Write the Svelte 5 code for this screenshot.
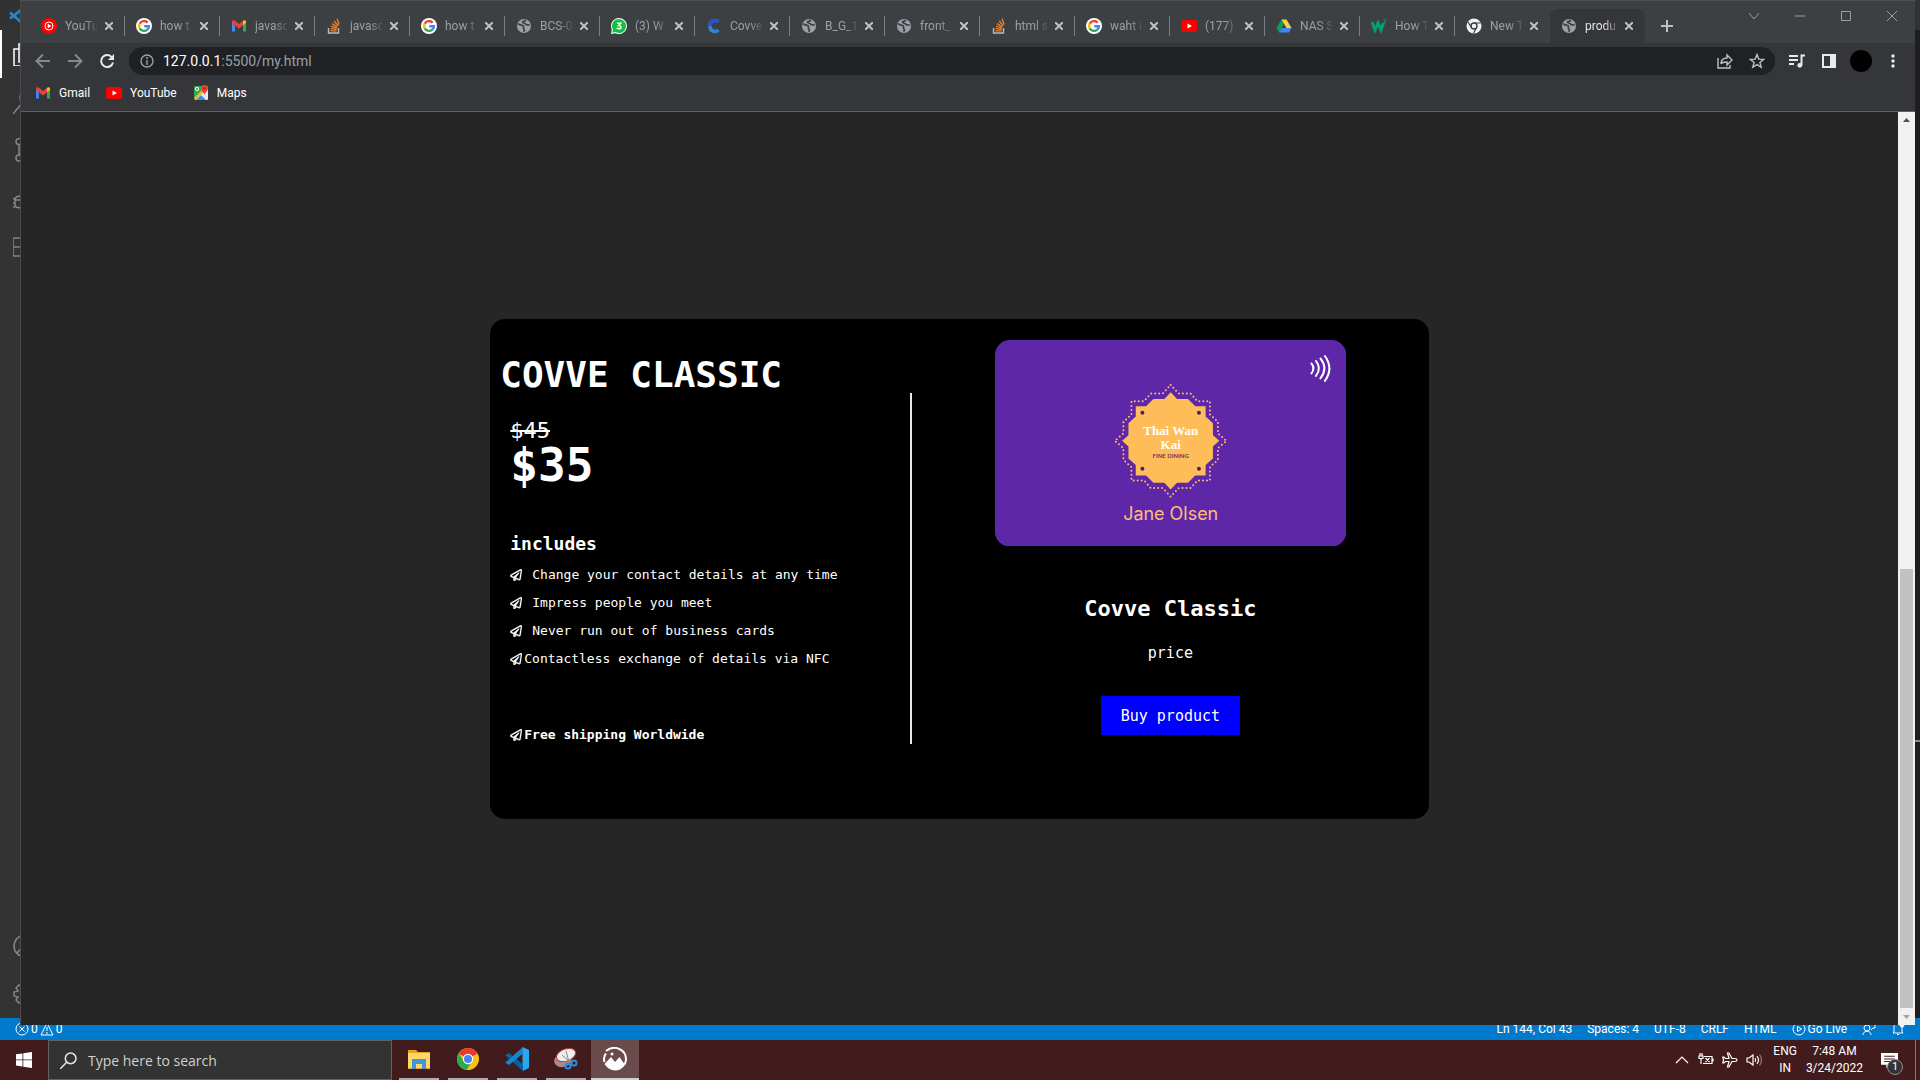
<script>
  const tabs = [
    { icon: 'ytmusic', title: 'YouTu' },
    { icon: 'google', title: 'how t' },
    { icon: 'gmail', title: 'javasc' },
    { icon: 'stack', title: 'javasc' },
    { icon: 'google', title: 'how t' },
    { icon: 'globe', title: 'BCS-0' },
    { icon: 'whatsapp', title: '(3) W' },
    { icon: 'covve', title: 'Covve' },
    { icon: 'globe', title: 'B_G_1' },
    { icon: 'globe', title: 'front_' },
    { icon: 'stack', title: 'html s' },
    { icon: 'google', title: 'waht i' },
    { icon: 'youtube', title: '(177) I' },
    { icon: 'drive', title: 'NAS S' },
    { icon: 'w3', title: 'How T' },
    { icon: 'chromemono', title: 'New T' },
    { icon: 'globe', title: 'produ', active: true }
  ];
  const bookmarks = [
    { icon: 'gmail', title: 'Gmail' },
    { icon: 'youtube', title: 'YouTube' },
    { icon: 'maps', title: 'Maps' }
  ];
  const features = [
    { text: 'Change your contact details at any time', spaced: true },
    { text: 'Impress people you meet', spaced: true },
    { text: 'Never run out of business cards', spaced: true },
    { text: 'Contactless exchange of details via NFC', spaced: false }
  ];
  const activity = ['files', 'search', 'scm', 'debug', 'blocks'];
  const statusRight = ['Ln 144, Col 43', 'Spaces: 4', 'UTF-8', 'CRLF', 'HTML'];
  const pinned = [
    { icon: 'explorer', label: 'File Explorer' },
    { icon: 'chrome', label: 'Google Chrome' },
    { icon: 'vscode', label: 'Visual Studio Code' },
    { icon: 'snip', label: 'Snipping Tool' },
    { icon: 'photos', label: 'Image viewer', active: true }
  ];

  // One quadrant of the badge, mirrored into the other three
  function ring(quadrant) {
    const back = quadrant.slice(0, -1).reverse();
    const right = [...quadrant, ...back.map(([x, y]) => [x, -y])];
    const left = right.slice(1, -1).reverse().map(([x, y]) => [-x, y]);
    return [...right, ...left].map((p) => p.join(',')).join(' ');
  }
  const badge = ring([[0, -146], [19, -126], [52, -126], [74, -104], [105, -104], [105, -73], [127, -53], [127, -17], [146, 0]]);
  const dots = ring([[0, -168], [24, -142], [60, -142], [80, -119], [118, -119], [118, -79], [142, -57], [142, -22], [168, 0]]);
</script>

{#snippet plane()}
  <svg class="plane" viewBox="0 0 512 512" aria-hidden="true">
    <path fill="currentColor" stroke="currentColor" stroke-width="12" d="M440 6.500L24 246.400c-34.400 19.900-31.100 70.800 5.700 85.900L144 379.600V464c0 46.400 59.200 65.500 86.600 28.600l43.800-59.100 111.900 46.200c5.900 2.400 12.100 3.600 18.300 3.600 8.200 0 16.300-2.100 23.600-6.200 12.800-7.200 21.600-20 23.900-34.500l59.400-387.200c6.100-40.100-36.900-68.800-71.500-48.900zM192 464v-64.600l36.600 15.100L192 464zm212.600-28.700l-153.800-63.500L391 169.500c10.700-15.500-9.500-33.500-23.700-21.200L155.800 332.600 48 288 464 48l-59.400 387.300z" />
  </svg>
{/snippet}

{#snippet icon(name)}
  <svg class="ico" viewBox="0 0 16 16" aria-hidden="true">
    {#if name === 'ytmusic'}
      <circle cx="8" cy="8" r="8" fill="#f00" /><circle cx="8" cy="8" r="4" fill="none" stroke="#fff" /><path d="M6.700 5.700v4.600L10.500 8z" fill="#fff" />
    {:else if name === 'google'}
      <circle cx="8" cy="8" r="8" fill="#fff" />
      <g fill="none" stroke-width="2.400">
        <path d="M11.600 4.600A4.900 4.900 0 0 0 3.700 5.700" stroke="#ea4335" />
        <path d="M3.700 5.700a4.900 4.900 0 0 0 0 4.700" stroke="#fbbc05" />
        <path d="M3.700 10.400a4.900 4.900 0 0 0 7.600 1.200" stroke="#34a853" />
        <path d="M11.300 11.600A4.900 4.900 0 0 0 12.900 8.200H8.200" stroke="#4285f4" />
      </g>
    {:else if name === 'gmail'}
      <path d="M1 4v9.500h3V7.400z" fill="#4285f4" /><path d="M15 4v9.500h-3V7.400z" fill="#34a853" /><path d="M1 3.500C1 2 3 1.800 4 2.700L8 6l4-3.300v4.500L8 10.400 1 5z" fill="#ea4335" /><path d="M12 2.700c1-.9 3-.7 3 .8V5l-3 2.400z" fill="#fbbc05" />
    {:else if name === 'stack'}
      <path d="M2.500 10v5h10v-5" fill="none" stroke="#bcbbbb" stroke-width="1.400" />
      <path d="M4.500 12.800h6M4.600 10.600l6 .8M5 8.200l5.800 1.900M6.200 5.600l5.100 3.300M8.200 3l4.100 4.700M11 .8l2.200 5.600" stroke="#f48024" stroke-width="1.300" />
    {:else if name === 'globe'}
      <circle cx="8" cy="8" r="7" fill="#9aa0a6" />
      <path d="M2.200 5.500c1.300 2.300 4.300 1 5.300 2.800.5 1.500-1 2 .5 2.700.8.500.2 1.800-.5 2.800M9.800 2C9 3.600 7 3 6.500 4c0 1.300 2 .7 2.600 1.600.6 1.500 2.400 1.400 4.700 1.400" fill="none" stroke="#3c4043" stroke-width="1.700" />
    {:else if name === 'whatsapp'}
      <path d="M8 0a8 8 0 1 1-3.500 15.200L0 16l.8-4.500A8 8 0 0 1 8 0z" fill="#fff" /><path d="M8 1a7 7 0 1 1-3.400 13.100l-3.300.7.600-3.300A7 7 0 0 1 8 1z" fill="#12c143" />
      <path d="M6 5.200h3.700L7.700 7.500c3 0 2.700 3.300.2 3.300-1 0-1.600-.4-2.100-.9" fill="none" stroke="#fff" stroke-width="1.500" />
    {:else if name === 'covve'}
      <path d="M12.500 4C10 1.500 4 2 4 8s6 6.500 8.500 4" fill="none" stroke="#2f86d8" stroke-width="3.600" /><path d="M12.500 4C10 1.500 4 2 4 8" fill="none" stroke="#2a50cf" stroke-width="3.600" />
    {:else if name === 'youtube'}
      <rect y="2" width="16" height="12" rx="3" fill="#f00" /><path d="M6.500 5.500v5L11 8z" fill="#fff" />
    {:else if name === 'drive'}
      <path d="M5.500 1.500L.5 10l2.600 4.400L8 5.800z" fill="#0f9d58" /><path d="M5.500 1.500h5l5 8.500h-5.100z" fill="#ffcd40" /><path d="M5.700 10h9.800l-2.600 4.400H3.100z" fill="#4285f4" />
    {:else if name === 'w3'}
      <path d="M1 4l3 8L7 5l3 7L12.500 5" fill="none" stroke="#04a070" stroke-width="3" /><path d="M12.500 2h2l-1 1.500q1.800 1.500-.7 1.900" fill="none" stroke="#04a070" />
    {:else if name === 'chromemono'}
      <circle cx="8" cy="8" r="7.500" fill="#f1f3f4" /><circle cx="8" cy="8" r="3" fill="none" stroke="#3c4043" stroke-width="1.400" /><path d="M8 5h6.500M5.400 9.500L2 4M10.600 9.500L7.500 15.300" stroke="#3c4043" stroke-width="1.200" />
    {:else if name === 'maps'}
      <rect x="1" y="1" width="14" height="14" rx="1" fill="#34a853" /><path d="M2 15L14 3l1 1v10l-1 1z" fill="#e8eaed" /><path d="M3 15l5-5 5 5z" fill="#4285f4" /><path d="M1 13L13 1l1.500 1.500L2.500 14.500z" fill="#fbbc05" /><circle cx="4" cy="4" r="1.600" fill="none" stroke="#fff" /><path d="M11.500 0a3.500 3.500 0 0 1 3.500 3.500c0 2.500-3 3.500-3.500 7-.5-3.500-3.500-4.500-3.500-7A3.500 3.500 0 0 1 11.500 0z" fill="#ea4335" /><circle cx="11.500" cy="3.500" r="1.200" fill="#a52714" />
    {/if}
  </svg>
{/snippet}

<div class="desktop">
  <div class="editor">
    <header class="editor-title">
      <svg viewBox="0 0 16 16" aria-hidden="true"><path d="M1 4.500l15 13M1 10.500L16 -1" stroke="#2489ca" stroke-width="2.600" /></svg>
    </header>
    <div class="editor-body">
      <nav class="activity" aria-label="Views">
        {#each activity as name, i}
          <button class:current={i === 0} aria-label={name}>
            <svg viewBox="0 0 24 24" aria-hidden="true">
              {#if name === 'files'}<path d="M6 7H1v17h13v-4M6 2h10l5 5v13H6z" />
              {:else if name === 'search'}<circle cx="15" cy="8" r="8" /><path d="M9 13L0 24" />
              {:else if name === 'scm'}<circle cx="6" cy="3.500" r="3" /><circle cx="6" cy="20" r="3" /><circle cx="18" cy="8" r="3" /><path d="M6 6.500V17M18 11c0 4-10 2-11.500 6" />
              {:else if name === 'debug'}<path d="M8 0v8M8 1l15 9-10 6M2 14c0-5 8-5 8 0v4c0 5-8 5-8 0zM0 12l2 2M0 17h2M0 22l2-2M2 14h8" />
              {:else}<path d="M0 4h10v9h10v9H0zM0 13h10v9M14 1h8v8h-8z" />{/if}
            </svg>
          </button>
        {/each}
        <span class="grow"></span>
        <button aria-label="Accounts"><svg viewBox="0 0 24 24" aria-hidden="true"><circle cx="12" cy="12" r="11" /><circle cx="12" cy="9" r="4.500" /><path d="M4 20c2-7 14-7 16 0" /></svg></button>
        <button aria-label="Manage"><svg viewBox="0 0 24 24" aria-hidden="true"><path d="M10 1h4l1 4 3-2 3 3-2 3 4 1v4l-4 1 2 3-3 3-3-2-1 4h-4l-1-4-3 2-3-3 2-3-4-1v-4l4-1-2-3 3-3 3 2z" /><circle cx="12" cy="12" r="3" /></svg></button>
      </nav>
      <div class="editor-pane"><span class="mark"></span></div>
    </div>
    <footer class="status">
      <button>
        <svg viewBox="0 0 14 14" aria-hidden="true"><circle cx="7" cy="7" r="6" /><path d="M4.500 4.500l5 5M9.500 4.500l-5 5" /></svg>
        0
        <svg viewBox="0 0 14 14" aria-hidden="true"><path d="M7 1l6 12H1zM7 5v4M7 10v2" /></svg>
        0
      </button>
      <span class="grow"></span>
      {#each statusRight as text}<span>{text}</span>{/each}
      <button><svg viewBox="0 0 14 14" aria-hidden="true"><circle cx="7" cy="7" r="6" /><path d="M5.500 4.500v5L9.500 7z" /></svg>Go Live</button>
      <button aria-label="Feedback"><svg viewBox="0 0 14 14" aria-hidden="true"><circle cx="5" cy="6" r="3" /><path d="M1 13c0-5 8-5 8 0M7 1h6v5h-2L9 8" /></svg></button>
      <button aria-label="Notifications"><svg viewBox="0 0 14 14" aria-hidden="true"><path d="M3 10V5c0-5 8-5 8 0v5l1 1H2zM6 12.500h2" /><circle cx="11" cy="3" r="2" fill="#fff" /></svg></button>
    </footer>
  </div>

  <section class="browser" aria-label="Browser window">
    <div class="strip">
      <div class="tabs">
        {#each tabs as tab}
          <div class="tab" class:active={tab.active}>
            {@render icon(tab.icon)}
            <span class="tab-title">{tab.title}</span>
            <button class="close" aria-label="Close tab"><svg viewBox="0 0 8 8" aria-hidden="true"><path d="M0 0l8 8M8 0L0 8" /></svg></button>
          </div>
        {/each}
        <button class="new-tab" aria-label="New tab"><svg viewBox="0 0 12 12" aria-hidden="true"><path d="M6 0v12M0 6h12" /></svg></button>
      </div>
      <div class="controls">
        <button aria-label="Search tabs"><svg viewBox="0 0 10 10" aria-hidden="true"><path d="M0 2l5 6 5-6" /></svg></button>
        <button aria-label="Minimize"><svg viewBox="0 0 10 10" aria-hidden="true"><path d="M0 5h10" /></svg></button>
        <button aria-label="Maximize"><svg viewBox="0 0 10 10" aria-hidden="true"><path d="M.5.5h9v9h-9z" /></svg></button>
        <button aria-label="Close"><svg viewBox="0 0 10 10" aria-hidden="true"><path d="M0 0l10 10M10 0L0 10" /></svg></button>
      </div>
    </div>

    <div class="toolbar">
      <button class="tool dim" aria-label="Back"><svg viewBox="0 0 16 16" aria-hidden="true"><path d="M15 8H2M8 1.500L1.500 8 8 14.500" /></svg></button>
      <button class="tool dim" aria-label="Forward"><svg viewBox="0 0 16 16" aria-hidden="true"><path d="M1 8h13M8 1.500L14.500 8 8 14.500" /></svg></button>
      <button class="tool" aria-label="Reload"><svg viewBox="0 0 16 16" aria-hidden="true"><path d="M13 4.500A6 6 0 1 0 14 9.500" /><path d="M15 1v6H9z" fill="currentColor" stroke="none" /></svg></button>
      <div class="omnibox">
        <svg class="info" viewBox="0 0 14 14" aria-hidden="true"><circle cx="7" cy="7" r="6" /><path d="M7 6v5M7 3v2" /></svg>
        <a class="url" href="#top"><b>127.0.0.1</b>:5500/my.html</a>
        <button class="tool soft" aria-label="Share"><svg viewBox="0 0 16 16" aria-hidden="true"><path d="M1 5v10h12v-3M4 11c0-5 3-6 6-6V2l5 5-5 5V9c-3 0-5 0-6 2z" /></svg></button>
        <button class="tool soft" aria-label="Bookmark"><svg viewBox="0 0 16 16" aria-hidden="true"><path d="M8 1.500l1.800 4.600 4.900.3-3.800 3.100 1.300 4.800L8 11.600l-4.200 2.700 1.300-4.800L1.300 6.400l4.900-.3z" /></svg></button>
      </div>
      <button class="tool" aria-label="Media"><svg viewBox="0 0 16 16" aria-hidden="true"><path d="M0 3h9M0 7h9M0 11h5M12.500 12V2.500H16" /><circle cx="10.800" cy="12.300" r="2.400" fill="currentColor" stroke="none" /></svg></button>
      <button class="tool" aria-label="Side panel"><svg viewBox="0 0 16 16" aria-hidden="true"><path d="M2 2h12v12H2z" /><path d="M9 2h5v12H9z" fill="currentColor" stroke="none" /></svg></button>
      <button class="tool" aria-label="Profile"><span class="avatar"></span></button>
      <button class="tool" aria-label="Menu"><svg viewBox="0 0 16 16" aria-hidden="true"><g fill="currentColor" stroke="none"><circle cx="8" cy="3" r="1.700" /><circle cx="8" cy="8" r="1.700" /><circle cx="8" cy="13" r="1.700" /></g></svg></button>
    </div>

    <nav class="bookmarks" aria-label="Bookmarks">
      {#each bookmarks as mark}
        <a href="#top">{@render icon(mark.icon)}{mark.title}</a>
      {/each}
    </nav>

    <div class="viewport">
      <main class="page">
        <article class="product">
          <div class="details">
            <h1>COVVE CLASSIC</h1>
            <div class="indent">
              <del>$45</del>
              <strong class="price">$35</strong>
              <h2>includes</h2>
              <ul>
                {#each features as feature}
                  <li class:spaced={feature.spaced}>{@render plane()}{feature.text}</li>
                {/each}
              </ul>
              <p class="shipping">{@render plane()}<b>Free shipping Worldwide</b></p>
            </div>
          </div>
          <div class="divider"></div>
          <div class="offer">
            <svg class="card" viewBox="0 0 352 207" role="img" aria-label="Covve business card">
              <rect width="352" height="207" rx="15" fill="#5e27a7" />
              <g fill="none" stroke="#fff" stroke-width="2" stroke-linecap="round">
                <path d="M317 23.500q4 5 0 10" /><path d="M321.500 21q6 7.500 0 15" /><path d="M326 18.500q8 10 0 20" /><path d="M330.500 16q9 12.500 0 25" />
              </g>
              <g transform="translate(176 101) scale(.3333)">
                <polygon points={badge} fill="#ffbd59" />
                <polygon points={dots} fill="none" stroke="#ffbd78" stroke-width="6" stroke-linecap="round" stroke-dasharray="0 12" />
                <g fill="#4a2260"><circle cx="-85" cy="-84" r="6" /><circle cx="85" cy="-84" r="6" /><circle cx="-85" cy="84" r="6" /><circle cx="85" cy="84" r="6" /></g>
              </g>
              <text class="brand" x="176" y="95">Thai Wan</text>
              <text class="brand" x="176" y="109">Kai</text>
              <text class="tag" x="176" y="118">FINE DINING</text>
              <text class="owner" x="176" y="180">Jane Olsen</text>
            </svg>
            <h2 class="name">Covve Classic</h2>
            <p class="label">price</p>
            <button class="buy">Buy product</button>
          </div>
        </article>
      </main>
      <div class="scrollbar" aria-hidden="true">
        <svg viewBox="0 0 17 17"><path d="M5 10l3.500-4 3.500 4z" fill="#505050" /></svg>
        <div class="track"><div class="thumb"></div></div>
        <svg viewBox="0 0 17 17"><path d="M5 7l3.500 4L12 7z" fill="#a3a3a3" /></svg>
      </div>
    </div>
  </section>

  <footer class="taskbar">
    <button class="start" aria-label="Start"><svg viewBox="0 0 16 16" aria-hidden="true"><path d="M0 2.300l6.500-.9v6.100H0zM7.300 1.300L16 0v7.500H7.300zM0 8.300h6.500v6.200L0 13.600zM7.300 8.300H16V16l-8.700-1.300z" fill="#fff" /></svg></button>
    <label class="search">
      <svg viewBox="0 0 16 16" aria-hidden="true"><circle cx="10" cy="6" r="5" /><path d="M6.500 9.500L0 16" /></svg>
      <input type="text" placeholder="Type here to search" aria-label="Search" />
    </label>
    <div class="pins">
      {#each pinned as app}
        <button class:open={app.active} aria-label={app.label}>
          <svg viewBox="0 0 24 24" aria-hidden="true">
            {#if app.icon === 'explorer'}
              <path d="M1 3h8l2 2h12v17H1z" fill="#e8a317" /><path d="M1 6h22v15H1z" fill="#ffd869" /><path d="M5 12h14v10h-4v-5H9v5H5z" fill="#3f97d8" />
            {:else if app.icon === 'chrome'}
              <circle cx="12" cy="12" r="11" fill="#fbc116" /><path d="M12 12L2.500 6.500a11 11 0 0 1 19 0z" fill="#e33b2e" /><path d="M2.500 6.500a11 11 0 0 0 8.300 16.400L16 14l-8 0z" fill="#2da94f" /><path d="M12 12h9.500a11 11 0 0 1-10.700 11L16 14z" fill="#fbc116" /><circle cx="12" cy="12" r="5.200" fill="#fff" /><circle cx="12" cy="12" r="4" fill="#4285f4" />
            {:else if app.icon === 'vscode'}
              <path d="M17.500 0L24 3v18l-6.500 3z" fill="#29a8f2" /><path d="M2 7l2-1 14 11.500V24L.5 8.500z" fill="#0065a9" /><path d="M.5 15.500L18 0v6.500L4 18l-2-1z" fill="#1587d0" />
            {:else if app.icon === 'snip'}
              <ellipse cx="9" cy="13" rx="9" ry="7" fill="#a98a8b" transform="rotate(-20 9 13)" /><ellipse cx="12" cy="8" rx="10" ry="6" fill="#eee" stroke="#b33b3b" transform="rotate(-20 12 8)" /><path d="M8 8l8 7M12 4l3 11" stroke="#8a8a8a" /><g fill="none" stroke="#2d8de0" stroke-width="2"><circle cx="14" cy="19" r="2.500" /><circle cx="20" cy="16" r="2.500" /></g>
            {:else}
              <path d="M3 4C12-3 23 3 23 12q0 3-1.500 5.500" fill="none" stroke="#fff" stroke-width="2" /><path d="M3 6.500Q0 10 1.500 15" fill="none" stroke="#fff" stroke-width="2" /><path d="M1.500 17L8 10l4 5 4.500-5 5.500 8q-4 5.500-10 5.500T1.500 17z" fill="#fff" /><circle cx="9" cy="7" r="1.500" fill="#fff" />
            {/if}
          </svg>
        </button>
      {/each}
    </div>
    <span class="grow"></span>
    <div class="tray">
      <button aria-label="Hidden icons"><svg viewBox="0 0 16 16" aria-hidden="true"><path d="M2 11l6-6 6 6" /></svg></button>
      <button aria-label="Battery"><svg viewBox="0 0 16 16" aria-hidden="true"><path d="M6 4.500h8v7H5M15 6.500v3M2 1v3M4 1v3M1 4h4v2.500H1zM3 7v5M7.500 6l4 4M11.500 6l-4 4" /></svg></button>
      <button aria-label="Airplane mode"><svg viewBox="0 0 16 16" aria-hidden="true"><path d="M15 8q0-1.500-2-1.500h-3L7 1H5.500L7 6.500H3.500L2 5H.8l.7 3-.7 3H2l1.500-1.500H7L5.500 15H7l3-5.500h3q2 0 2-1.500z" /></svg></button>
      <button aria-label="Volume"><svg viewBox="0 0 16 16" aria-hidden="true"><path d="M1 6v4h2l4 3V3L3 6zM9 6q1.500 2 0 4M11 4q3 4 0 8" /><path d="M13.500 2.500q4 5.500 0 11" opacity=".4" /></svg></button>
    </div>
    <button class="clock lang">ENG<br />IN</button>
    <button class="clock">7:48 AM<br />3/24/2022</button>
    <button class="notes" aria-label="Notifications">
      <svg viewBox="0 0 16 16" aria-hidden="true"><path d="M0 1h16v11H8l-3 3v-3H0z" fill="#fff" /><path d="M3 4h10M3 6.500h10M3 9h6" stroke="#451c1f" /></svg>
      <span class="count">1</span>
    </button>
    <span class="peek"></span>
  </footer>
</div>

<style>
  :global(body) { margin: 0; background: #1e1e1e; }
  * { box-sizing: border-box; }
  button { margin: 0; padding: 0; border: 0; background: none; color: inherit; font: inherit; display: flex; align-items: center; justify-content: center; }
  a { color: inherit; text-decoration: none; }
  h1, h2, p, ul { margin: 0; padding: 0; font-size: inherit; }
  svg { display: block; flex: none; }
  .grow { flex: 1; }

  .desktop { position: relative; min-height: 100vh; display: flex; flex-direction: column; font: 12px/16px Roboto, "Noto Sans", sans-serif; color: #fff; }

  .editor { flex: 1; display: flex; flex-direction: column; background: #1e1e1e; }
  .editor-title { height: 30px; background: #323233; padding: 8px 9px; }
  .editor-title svg { width: 16px; height: 16px; }
  .editor-body { flex: 1; display: flex; }
  .activity { width: 48px; background: #333; display: flex; flex-direction: column; }
  .activity button { height: 48px; border-left: 2px solid transparent; color: #858585; }
  .activity button.current { border-color: #fff; color: #fff; }
  .activity svg { width: 24px; height: 24px; fill: none; stroke: currentColor; stroke-width: 1.5; }
  .editor-pane { flex: 1; display: flex; align-items: center; justify-content: flex-end; padding-top: 434px; }
  .mark { width: 8px; height: 2px; background: #8a8a8a; }
  .status { height: 22px; background: #007acc; display: flex; align-items: center; gap: 15px; padding: 0 15px; white-space: nowrap; }
  .status button { gap: 2px; }
  .status svg { width: 14px; height: 14px; fill: none; stroke: #fff; }

  .browser { position: absolute; top: 0; left: 20px; right: 5px; bottom: 55px; display: flex; flex-direction: column; background: #35363a; border-left: 1px solid #4a4b4e; }
  .strip { height: 43px; display: flex; justify-content: space-between; background: #3c4043; border-top: 1px solid #4c5053; }
  .tabs { flex: 1; display: flex; padding: 8px 0 0 9px; min-width: 0; }
  .tab { position: relative; flex: 0 1 95px; min-width: 0; display: flex; align-items: center; gap: 8px; padding: 0 12px 0 11px; color: #9aa0a6; }
  .tab::after { content: ""; position: absolute; right: 0; top: 7px; height: 20px; width: 1px; background: #7b7f83; }
  .tab:nth-last-child(3)::after, .tab.active::after { display: none; }
  .tab.active { background: #35363a; border-radius: 8px 8px 0 0; color: #dfe1e5; }
  .tab-title { flex: 1; min-width: 0; white-space: nowrap; mask-image: linear-gradient(90deg, #000 60%, transparent 110%); }
  .ico { width: 16px; height: 16px; }
  .close svg { width: 8px; height: 8px; stroke: #bdc1c6; stroke-width: 2; }
  .new-tab { width: 44px; }
  .new-tab svg { width: 12px; height: 12px; stroke: #bdc1c6; stroke-width: 2; }
  .controls { display: flex; height: 29px; }
  .controls button { width: 46px; }
  .controls svg { width: 10px; height: 10px; fill: none; stroke: #9a9da0; }

  .toolbar { display: flex; align-items: center; height: 36px; padding: 0 6px; color: #e8eaed; }
  .tool { width: 32px; height: 28px; flex: none; }
  .tool svg { width: 16px; height: 16px; fill: none; stroke: currentColor; stroke-width: 2; }
  .tool.dim { color: #85888c; }
  .tool.soft { color: #bdc1c6; }
  .tool.soft svg { stroke-width: 1.4; }
  .omnibox { flex: 1; display: flex; align-items: center; height: 28px; margin: 0 6px; padding: 0 2px 0 11px; border-radius: 14px; background: #202124; }
  .info { width: 14px; height: 14px; fill: none; stroke: #9aa0a6; stroke-width: 1.4; }
  .url { flex: 1; margin-left: 9px; font-size: 14px; color: #9aa0a6; }
  .url b { font-weight: 400; color: #fff; }
  .avatar { width: 22px; height: 22px; border-radius: 50%; background: #000; }
  .bookmarks { display: flex; align-items: flex-start; gap: 16px; height: 33px; padding: 6px 14px; border-bottom: 1px solid #5f6164; }
  .bookmarks a { display: flex; align-items: center; gap: 8px; }

  .viewport { flex: 1; display: flex; background: #262626; }
  .page { flex: 1; display: flex; align-items: center; justify-content: center; font-family: "DejaVu Sans Mono", "Liberation Mono", monospace; }
  .scrollbar { width: 17px; display: flex; flex-direction: column; background: #f1f1f1; }
  .scrollbar svg { width: 17px; height: 17px; }
  .track { flex: 1; display: flex; flex-direction: column; justify-content: flex-end; padding: 0 2px; }
  .thumb { height: 50%; background: #c1c1c1; }

  .product { width: 50%; min-height: 500px; display: grid; grid-template-columns: 420fr 2px 517fr; background: #000; border-radius: 15px; font-size: 13px; }
  .details { padding: 32px 10px; }
  h1 { font-size: 36px; line-height: 48px; white-space: nowrap; }
  .indent { padding: 20px 10px; display: flex; flex-direction: column; }
  del { font-size: 22px; line-height: 24px; }
  .price { font-size: 46px; line-height: 44px; }
  .indent h2 { margin-top: 43px; font-size: 18px; line-height: 28px; }
  ul { list-style: none; margin-top: 3px; }
  li, .shipping { display: flex; align-items: center; gap: 2px; line-height: 28px; white-space: nowrap; }
  li.spaced { gap: 10px; }
  .plane { width: 12px; height: 12px; }
  .shipping { margin-top: 48px; }
  .divider { height: 351px; margin-top: 74px; background: #e6e6e6; }
  .offer { display: flex; flex-direction: column; align-items: center; padding-top: 21px; }
  .card { width: 68%; }
  .card text { text-anchor: middle; }
  .brand { font: 700 13px "Liberation Serif", serif; fill: #fff; }
  .tag { font: 700 6px Lato, sans-serif; fill: #6b3560; }
  .owner { font: 18px Inter, sans-serif; fill: #ffbd78; }
  .name { margin-top: 49px; font-size: 22px; line-height: 28px; }
  .label { margin-top: 16px; font-size: 15px; line-height: 28px; }
  .buy { margin-top: 29px; padding: 0 20px; height: 39px; background: #00f; font-size: 15px; }

  .taskbar { height: 40px; display: flex; background: #421b1d; }
  .start { width: 48px; }
  .start svg { width: 16px; height: 16px; }
  .search { width: 344px; display: flex; align-items: center; gap: 11px; padding: 0 11px; background: #333; border: 1px solid #626262; }
  .search svg { width: 17px; height: 17px; fill: none; stroke: #e8e8e8; stroke-width: 1.4; }
  .search input { flex: 1; min-width: 0; padding: 0; border: 0; outline: 0; background: none; font: 14px "Open Sans", sans-serif; color: #d0d0d0; }
  .search input::placeholder { color: #d0d0d0; opacity: 1; }
  .pins { display: flex; gap: 9px; padding-left: 7px; }
  .pins button { width: 40px; border-bottom: 2px solid #b9a9aa; }
  .pins .open { width: 48px; margin-left: -4px; background: #6b4a4c; border-color: #d6cdcd; }
  .pins svg { width: 24px; height: 24px; }
  .tray { display: flex; gap: 8px; margin-right: 11px; }
  .tray svg { width: 16px; height: 16px; fill: none; stroke: #fff; stroke-width: 1.2; }
  .clock { line-height: 17px; text-align: center; }
  .lang { margin-right: 9px; }
  .notes { position: relative; width: 52px; }
  .notes svg { width: 17px; height: 17px; }
  .count { position: absolute; left: 24px; top: 19px; width: 16px; height: 16px; border: 1px solid #8f8f8f; border-radius: 50%; background: #333; font-size: 11px; line-height: 14px; text-align: center; }
  .peek { width: 5px; border-left: 1px solid #8b7374; }
</style>
